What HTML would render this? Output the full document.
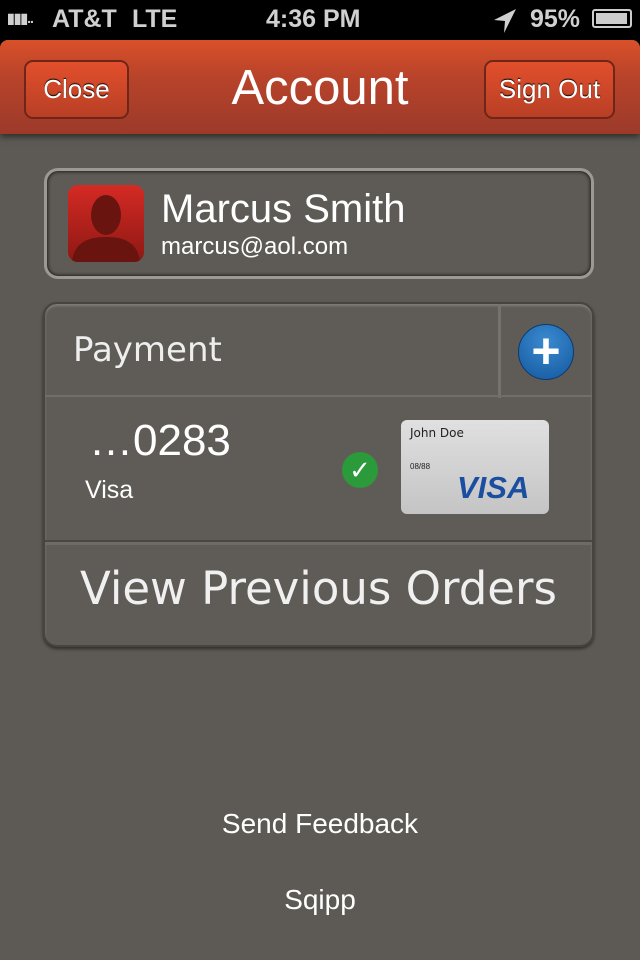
<!DOCTYPE html>
<html><head><meta charset="utf-8"><style>
*{margin:0;padding:0;box-sizing:border-box}
body{width:640px;height:960px;background:#000;font-family:"Liberation Sans",sans-serif;overflow:hidden;position:relative}
.sb{position:absolute;top:0;left:0;width:640px;height:40px;background:#000;color:#d0d0d0;font-weight:bold;font-size:25px}
.sb span{position:absolute;top:5px}
.main{position:absolute;top:40px;left:0;width:640px;height:920px;background:#5d5a55;border-radius:8px 8px 0 0;overflow:hidden}
.nav{position:absolute;top:0;left:0;width:640px;height:94px;background:linear-gradient(#d9502a,#b8432a 40%,#9c3a2a);box-shadow:0 3px 6px rgba(0,0,0,.5)}
.btn{position:absolute;top:20px;height:59px;border:2px solid #6e2618;border-radius:9px;background:linear-gradient(#e24f2c,#b83f25);color:#fff;font-size:26px;text-align:center;line-height:55px;text-shadow:0 -1px 1px #000}
.title{position:absolute;top:18px;width:640px;text-align:center;color:#fff;font-size:49px;line-height:60px}
.card1{position:absolute;left:44px;top:128px;width:550px;height:111px;border:3px solid #9c9893;border-radius:14px;background:#5e5b56;box-shadow:inset 0 0 4px #000}
.av{position:absolute;left:21px;top:14px;width:76px;height:77px;border-radius:10px;background:linear-gradient(#d52a24,#8d1814);overflow:hidden}
.panel{position:absolute;left:43px;top:262px;width:551px;height:345px;border-radius:14px;background:#5f5c57;border:2px solid #47443f;box-shadow:0 2px 3px rgba(0,0,0,.5),inset 0 2px 2px #807c76}
.vis{font-family:"DejaVu Sans",sans-serif}
</style></head><body>
<div class="sb">
<span style="left:7px;top:10px;font-size:14px;letter-spacing:-1px">▮▮▮..</span>
<span style="left:52px">AT&amp;T</span><span style="left:132px">LTE</span>
<span style="left:266px">4:36 PM</span>
<svg style="position:absolute;left:492px;top:7px" width="26" height="28"><path d="M24 2 L2 13 L13 14 L12 26 Z" fill="#d0d0d0"/></svg>
<span style="left:530px">95%</span>
<span style="left:592px;top:9px;width:40px;height:19px;border:2px solid #ccc;border-radius:3px;padding:2px"><i style="display:block;width:31px;height:11px;background:#ccc"></i></span>
</div>
<div class="main">
<div class="nav">
<div class="btn" style="left:24px;width:105px">Close</div>
<div class="title">Account</div>
<div class="btn" style="left:484px;width:131px">Sign Out</div>
</div>
<div class="card1">
<div class="av"><svg width="76" height="77"><ellipse cx="38" cy="30" rx="15" ry="20" fill="#6a1410"/><path d="M4 77 C6 56 22 52 38 52 C54 52 70 56 72 77Z" fill="#6a1410"/></svg></div>
<div style="position:absolute;left:114px;top:16px;color:#fff;font-size:40px">Marcus Smith</div>
<div style="position:absolute;left:114px;top:62px;color:#fff;font-size:24px">marcus@aol.com</div>
</div>
<div class="panel">
<div class="vis" style="position:absolute;left:28px;top:26px;color:#eee;font-size:34px">Payment</div>
<div style="position:absolute;left:453px;top:0;width:3px;height:94px;background:#75726d"></div>
<div style="position:absolute;left:0;top:91px;width:547px;height:2px;background:#716e69"></div>
<div style="position:absolute;left:473px;top:20px;width:56px;height:56px;border-radius:50%;background:radial-gradient(circle at 50% 30%,#3a8ad0,#14589e);border:1px solid #0c3a6e;color:#fff;font-size:50px;font-weight:bold;text-align:center;line-height:52px">+</div>
<div style="position:absolute;left:44px;top:112px;color:#fff;font-size:44px">…0283</div>
<div style="position:absolute;left:40px;top:172px;color:#fff;font-size:25px">Visa</div>
<div style="position:absolute;left:297px;top:148px;width:36px;height:36px;border-radius:50%;background:#2a9a3a;color:#fff;font-size:26px;text-align:center;line-height:36px">✓</div>
<div style="position:absolute;left:356px;top:116px;width:148px;height:94px;border-radius:6px;background:linear-gradient(#e0e0e0,#c4c4c4)">
<div class="vis" style="position:absolute;left:9px;top:6px;font-size:12px;color:#222">John Doe</div>
<div style="position:absolute;left:9px;top:42px;font-size:8px;color:#222">08/88</div>
<div style="position:absolute;left:56px;top:50px;font-size:31px;font-weight:bold;font-style:italic;color:#1a4ea0">VISA</div>
</div>
<div style="position:absolute;left:0;top:236px;width:547px;height:5px;background:#6e6b66;border-top:2px solid #4a4742"></div>
<div class="vis" style="position:absolute;left:0;top:258px;width:547px;text-align:center;color:#f0f0f0;font-size:45px">View Previous Orders</div>
</div>
<div style="position:absolute;top:768px;width:640px;text-align:center;color:#fff;font-size:28px">Send Feedback</div>
<div style="position:absolute;top:844px;width:640px;text-align:center;color:#fff;font-size:28px">Sqipp</div>
</div>
</body></html>
